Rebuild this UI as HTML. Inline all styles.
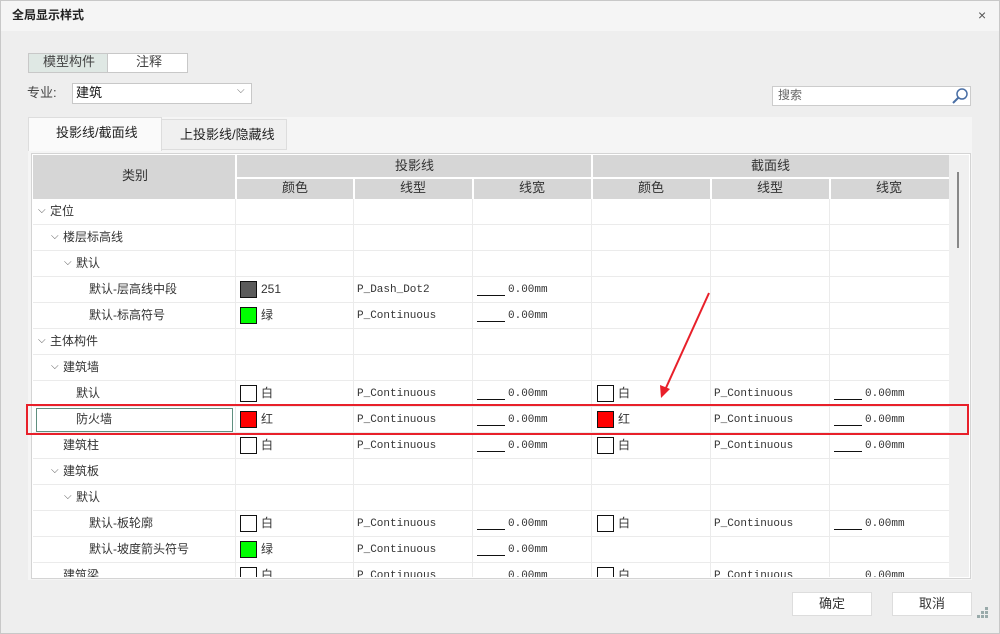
<!DOCTYPE html>
<html><head><meta charset="utf-8"><style>
*{margin:0;padding:0;box-sizing:border-box}
body{width:1000px;height:634px;background:#fff;font-family:"Liberation Sans","Noto Sans CJK SC",sans-serif;font-size:12px;line-height:1.15;color:#333;position:relative;overflow:hidden}
.a{position:absolute}
.mono{font-family:"Liberation Mono","Noto Sans CJK SC",monospace;font-size:11px;color:#333}
.sw{position:absolute;width:17px;height:17px;border:1px solid #111}
.lw{position:absolute;width:28px;border-bottom:1px solid #111;height:14px}
.row{position:absolute;left:0;width:916px;height:26px;border-bottom:1px solid #ebebeb}
.t{position:absolute;top:6px;white-space:nowrap}
.ch{position:absolute;top:6px;font-size:10px;color:#555}
.vl{position:absolute;top:0;width:1px;height:26px;background:#ebebeb}
</style></head><body>
<div class="a" style="left:0;top:0;width:1000px;height:634px;border:1px solid #c8c8c8;background:#eeeeee"></div>
<div class="a" style="left:1px;top:1px;width:998px;height:30px;background:#f5f5f5"></div>
<div class="a" style="left:12px;top:9px;font-weight:bold;font-size:12px;color:#222">全局显示样式</div>
<div class="a" style="left:978px;top:7px;font-size:14px;color:#555">×</div>

<div class="a" style="left:28px;top:53px;width:160px;height:20px;border:1px solid #c8c8c8;background:#fff"></div>
<div class="a" style="left:29px;top:54px;width:79px;height:18px;background:#dfe8e4;border-right:1px solid #c8c8c8"></div>
<div class="a" style="left:43px;top:55px;color:#444;font-size:13px">模型构件</div>
<div class="a" style="left:136px;top:55px;color:#444;font-size:13px">注释</div>

<div class="a" style="left:27px;top:86px;color:#444;font-size:13px">专业:</div>
<div class="a" style="left:72px;top:83px;width:180px;height:21px;border:1px solid #c8c8c8;background:#fff"></div>
<div class="a" style="left:76px;top:86px;color:#111;font-size:13px">建筑</div>
<div class="a" style="left:237px;top:85px;color:#666;font-size:10px">⌵</div>

<div class="a" style="left:772px;top:86px;width:199px;height:20px;border:1px solid #ccc;background:#fff"></div>
<div class="a" style="left:778px;top:89px;color:#666;font-size:12px">搜索</div>
<svg class="a" style="left:951px;top:87px" width="18" height="18"><circle cx="11" cy="7" r="5" fill="none" stroke="#4a6fa5" stroke-width="1.5"/><line x1="7.5" y1="10.5" x2="2" y2="16" stroke="#4a6fa5" stroke-width="2"/></svg>

<div class="a" style="left:28px;top:117px;width:944px;height:463px;background:#f5f5f5"></div>
<div class="a" style="left:28px;top:117px;width:134px;height:34px;background:#fafafa;border:1px solid #ddd;border-bottom:none"></div>
<div class="a" style="left:56px;top:126px;color:#222;font-size:13px">投影线/截面线</div>
<div class="a" style="left:161px;top:119px;width:126px;height:31px;background:#f0f0f0;border:1px solid #ddd"></div>
<div class="a" style="left:180px;top:128px;color:#222;font-size:13px">上投影线/隐藏线</div>
<div class="a" style="left:31px;top:153px;width:940px;height:426px;border:1px solid #d4d4d4;background:#fff"></div>
<div class="a" style="left:949px;top:155px;width:20px;height:422px;background:#f0f0f0"></div>
<div class="a" style="left:957px;top:172px;width:2px;height:76px;background:#888"></div>

<div class="a" style="left:33px;top:155px;width:916px;height:422px;overflow:hidden">
<div class="a" style="left:0;top:0;width:916px;height:44px;background:#d6d6d6"></div>
<div class="a" style="left:202px;top:22px;width:714px;height:2px;background:#fff"></div>
<div class="a" style="left:202px;top:0;width:2px;height:44px;background:#fff"></div>
<div class="a" style="left:558px;top:0;width:2px;height:44px;background:#fff"></div>
<div class="a" style="left:320px;top:22px;width:2px;height:22px;background:#fff"></div>
<div class="a" style="left:439px;top:22px;width:2px;height:22px;background:#fff"></div>
<div class="a" style="left:677px;top:22px;width:2px;height:22px;background:#fff"></div>
<div class="a" style="left:796px;top:22px;width:2px;height:22px;background:#fff"></div>
<div class="a" style="left:89px;top:14px;font-size:13px">类别</div>
<div class="a" style="left:362px;top:4px;font-size:13px">投影线</div>
<div class="a" style="left:718px;top:4px;font-size:13px">截面线</div>
<div class="a" style="left:249px;top:26px;font-size:13px">颜色</div>
<div class="a" style="left:367px;top:26px;font-size:13px">线型</div>
<div class="a" style="left:486px;top:26px;font-size:13px">线宽</div>
<div class="a" style="left:605px;top:26px;font-size:13px">颜色</div>
<div class="a" style="left:724px;top:26px;font-size:13px">线型</div>
<div class="a" style="left:843px;top:26px;font-size:13px">线宽</div>

<div class="a" style="left:0;top:44px;width:916px;height:400px">
<div class="vl" style="left:202px;height:400px"></div><div class="vl" style="left:320px;height:400px"></div><div class="vl" style="left:439px;height:400px"></div><div class="vl" style="left:558px;height:400px"></div><div class="vl" style="left:677px;height:400px"></div><div class="vl" style="left:796px;height:400px"></div>

<div class="row" style="top:0"><span class="ch" style="left:5px">⌵</span><span class="t" style="left:17px">定位</span></div>
<div class="row" style="top:26px"><span class="ch" style="left:18px">⌵</span><span class="t" style="left:30px">楼层标高线</span></div>
<div class="row" style="top:52px"><span class="ch" style="left:31px">⌵</span><span class="t" style="left:43px">默认</span></div>
<div class="row" style="top:78px"><span class="t" style="left:56px">默认-层高线中段</span>
<div class="sw" style="left:207px;top:4px;background:#5a5a5a"></div><span class="t" style="left:228px">251</span><span class="t mono" style="left:324px;top:7px">P_Dash_Dot2</span><div class="lw" style="left:444px;top:5px"></div><span class="t mono" style="left:475px;top:7px">0.00mm</span></div>
<div class="row" style="top:104px"><span class="t" style="left:56px">默认-标高符号</span>
<div class="sw" style="left:207px;top:4px;background:#00ff00"></div><span class="t" style="left:228px">绿</span><span class="t mono" style="left:324px;top:7px">P_Continuous</span><div class="lw" style="left:444px;top:5px"></div><span class="t mono" style="left:475px;top:7px">0.00mm</span></div>
<div class="row" style="top:130px"><span class="ch" style="left:5px">⌵</span><span class="t" style="left:17px">主体构件</span></div>
<div class="row" style="top:156px"><span class="ch" style="left:18px">⌵</span><span class="t" style="left:30px">建筑墙</span></div>
<div class="row" style="top:182px"><span class="t" style="left:43px">默认</span>
<div class="sw" style="left:207px;top:4px;background:#fff"></div><span class="t" style="left:228px">白</span><span class="t mono" style="left:324px;top:7px">P_Continuous</span><div class="lw" style="left:444px;top:5px"></div><span class="t mono" style="left:475px;top:7px">0.00mm</span>
<div class="sw" style="left:564px;top:4px;background:#fff"></div><span class="t" style="left:585px">白</span><span class="t mono" style="left:681px;top:7px">P_Continuous</span><div class="lw" style="left:801px;top:5px"></div><span class="t mono" style="left:832px;top:7px">0.00mm</span></div>
<div class="row" style="top:208px"><div class="a" style="left:3px;top:1px;width:197px;height:24px;border:1px solid #5f8f7f;background:#fff"></div><span class="t" style="left:43px">防火墙</span>
<div class="sw" style="left:207px;top:4px;background:#ff0000"></div><span class="t" style="left:228px">红</span><span class="t mono" style="left:324px;top:7px">P_Continuous</span><div class="lw" style="left:444px;top:5px"></div><span class="t mono" style="left:475px;top:7px">0.00mm</span>
<div class="sw" style="left:564px;top:4px;background:#ff0000"></div><span class="t" style="left:585px">红</span><span class="t mono" style="left:681px;top:7px">P_Continuous</span><div class="lw" style="left:801px;top:5px"></div><span class="t mono" style="left:832px;top:7px">0.00mm</span></div>
<div class="row" style="top:234px"><span class="t" style="left:30px">建筑柱</span>
<div class="sw" style="left:207px;top:4px;background:#fff"></div><span class="t" style="left:228px">白</span><span class="t mono" style="left:324px;top:7px">P_Continuous</span><div class="lw" style="left:444px;top:5px"></div><span class="t mono" style="left:475px;top:7px">0.00mm</span>
<div class="sw" style="left:564px;top:4px;background:#fff"></div><span class="t" style="left:585px">白</span><span class="t mono" style="left:681px;top:7px">P_Continuous</span><div class="lw" style="left:801px;top:5px"></div><span class="t mono" style="left:832px;top:7px">0.00mm</span></div>
<div class="row" style="top:260px"><span class="ch" style="left:18px">⌵</span><span class="t" style="left:30px">建筑板</span></div>
<div class="row" style="top:286px"><span class="ch" style="left:31px">⌵</span><span class="t" style="left:43px">默认</span></div>
<div class="row" style="top:312px"><span class="t" style="left:56px">默认-板轮廓</span>
<div class="sw" style="left:207px;top:4px;background:#fff"></div><span class="t" style="left:228px">白</span><span class="t mono" style="left:324px;top:7px">P_Continuous</span><div class="lw" style="left:444px;top:5px"></div><span class="t mono" style="left:475px;top:7px">0.00mm</span>
<div class="sw" style="left:564px;top:4px;background:#fff"></div><span class="t" style="left:585px">白</span><span class="t mono" style="left:681px;top:7px">P_Continuous</span><div class="lw" style="left:801px;top:5px"></div><span class="t mono" style="left:832px;top:7px">0.00mm</span></div>
<div class="row" style="top:338px"><span class="t" style="left:56px">默认-坡度箭头符号</span>
<div class="sw" style="left:207px;top:4px;background:#00ff00"></div><span class="t" style="left:228px">绿</span><span class="t mono" style="left:324px;top:7px">P_Continuous</span><div class="lw" style="left:444px;top:5px"></div><span class="t mono" style="left:475px;top:7px">0.00mm</span></div>
<div class="row" style="top:364px"><span class="t" style="left:30px">建筑梁</span>
<div class="sw" style="left:207px;top:4px;background:#fff"></div><span class="t" style="left:228px">白</span><span class="t mono" style="left:324px;top:7px">P_Continuous</span><div class="lw" style="left:444px;top:5px"></div><span class="t mono" style="left:475px;top:7px">0.00mm</span>
<div class="sw" style="left:564px;top:4px;background:#fff"></div><span class="t" style="left:585px">白</span><span class="t mono" style="left:681px;top:7px">P_Continuous</span><div class="lw" style="left:801px;top:5px"></div><span class="t mono" style="left:832px;top:7px">0.00mm</span></div>
</div>
</div>

<div class="a" style="left:26px;top:404px;width:943px;height:31px;border:2px solid #e8202a"></div>
<svg class="a" style="left:0;top:0" width="1000" height="634"><line x1="709" y1="293" x2="665" y2="390" stroke="#e8202a" stroke-width="2"/><polygon points="661,398 660,385 670,389" fill="#e8202a"/></svg>

<div class="a" style="left:792px;top:592px;width:80px;height:24px;border:1px solid #ddd;background:#fff;text-align:center;line-height:22px;font-size:13px">确定</div>
<div class="a" style="left:892px;top:592px;width:80px;height:24px;border:1px solid #ddd;background:#fff;text-align:center;line-height:22px;font-size:13px">取消</div>
<svg class="a" style="left:975px;top:607px" width="16" height="16" fill="#9aa"><rect x="10" y="0" width="3" height="3"/><rect x="10" y="4" width="3" height="3"/><rect x="6" y="4" width="3" height="3"/><rect x="10" y="8" width="3" height="3"/><rect x="6" y="8" width="3" height="3"/><rect x="2" y="8" width="3" height="3"/></svg>
</body></html>
